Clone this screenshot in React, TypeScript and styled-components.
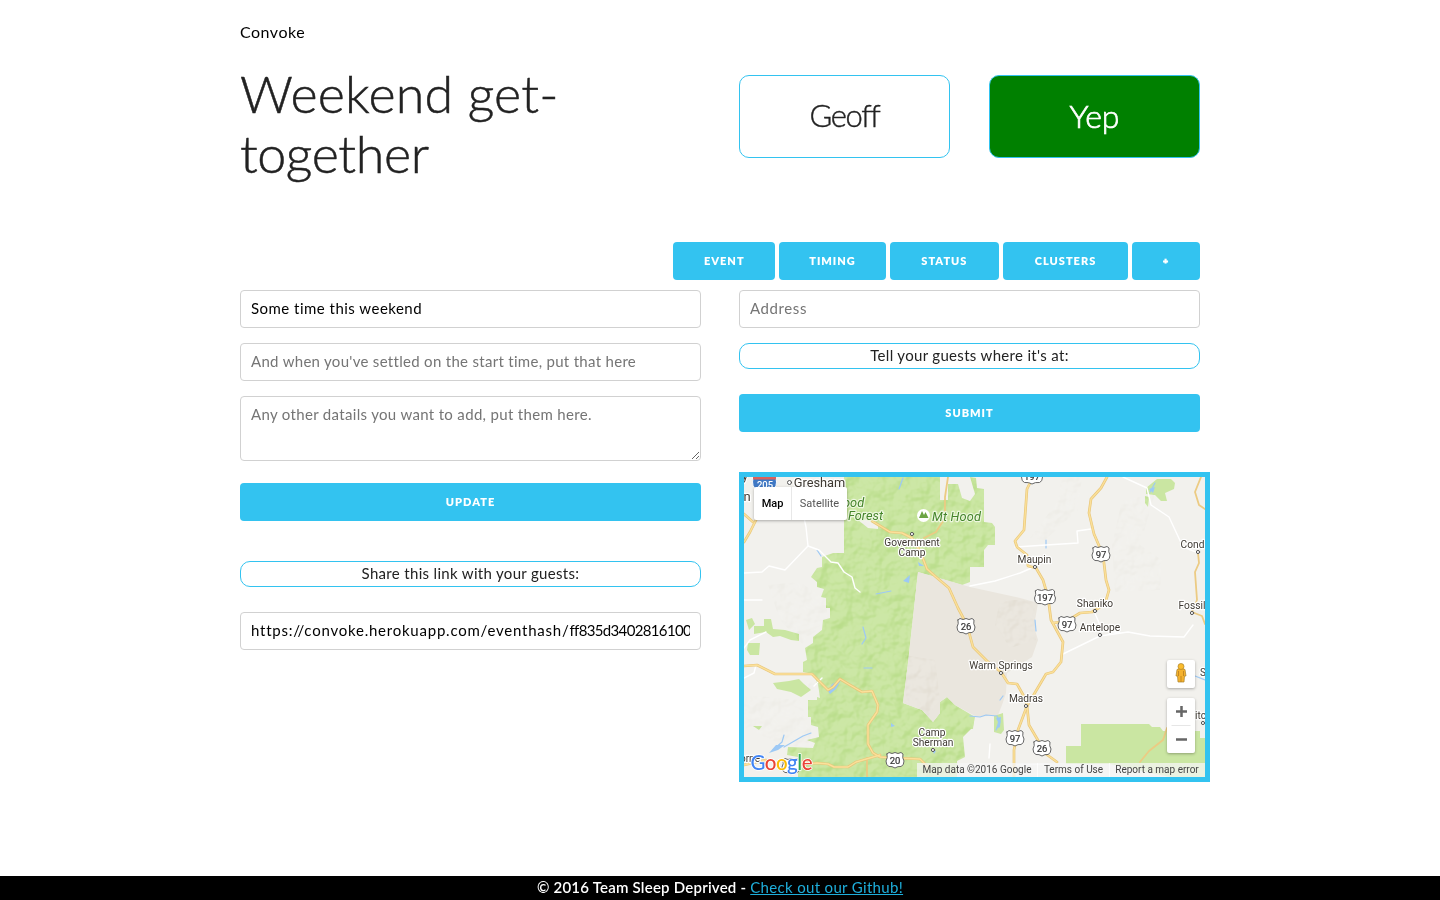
import React from "react";
import styled, { createGlobalStyle } from "styled-components";

const sky = "#33c3f0";

const GlobalStyle = createGlobalStyle`
  *, *::before, *::after { box-sizing: border-box; }
  body { margin: 0; background: #fff; color: #000; font-family: Lato, "Open Sans", sans-serif; font-size: 15px; }
  h1, h2, p { margin: 0; font-weight: inherit; }
`;

const Page = styled.div`
  display: flex;
  flex-direction: column;
  height: 900px;
  overflow: hidden;
`;

const Container = styled.main`
  width: 960px;
  margin: 0 auto;
  flex: 1;
`;

const Brand = styled.div`
  height: 65px;
  padding-top: 20px;
  font-size: 16px;
  line-height: 24px;
  letter-spacing: 0.5px;
`;

const Columns = styled.div`
  display: grid;
  grid-template-columns: 461px 461px;
  column-gap: 38px;
`;

const Hero = styled(Columns)`
  height: 177px;
`;

const Title = styled.h1`
  width: 380px;
  margin-top: -2px;
  font-size: 52px;
  line-height: 60px;
  font-weight: 300;
  letter-spacing: -0.4px;
  color: #222;
  -webkit-text-stroke: 0.5px #222;
`;

const WideLine = styled.span`
  letter-spacing: 0.2px;
`;

const Cards = styled.div`
  display: flex;
  justify-content: space-between;
  padding-top: 10px;
`;

const Card = styled.div<{ $going?: boolean }>`
  display: flex;
  align-items: center;
  justify-content: center;
  width: 211px;
  height: 83px;
  padding-bottom: 3px;
  border: 1px solid ${sky};
  border-radius: 10px;
  font-size: ${(p) => (p.$going ? 32 : 31)}px;
  font-weight: 300;
  letter-spacing: ${(p) => (p.$going ? 0 : -1.4)}px;
  color: ${(p) => (p.$going ? "#fff" : "#222")};
  -webkit-text-stroke: ${(p) => (p.$going ? "0.7px #fff" : "0.4px #222")};
  background: ${(p) => (p.$going ? "#008000" : "#fff")};
`;

const Tabs = styled.nav`
  display: flex;
  justify-content: flex-end;
  gap: 3.75px;
  margin-bottom: 10px;
`;

const Button = styled.button<{ $width?: number }>`
  display: block;
  width: ${(p) => (p.$width ? `${p.$width}px` : "100%")};
  height: 38px;
  padding: 0;
  border: 0;
  border-radius: 4px;
  background: ${sky};
  color: #fff;
  font: 800 11px/38px Lato, sans-serif;
  letter-spacing: 1px;
  text-align: center;
  text-transform: uppercase;
`;

const Plus = styled.span`
  display: block;
  height: 36px;
  font-size: 8px;
  line-height: 36px;
  -webkit-text-stroke: 1px #fff;
`;

const Field = styled.input<{ $track?: number }>`
  display: block;
  width: 100%;
  height: 38px;
  margin: 0 0 15px;
  padding: 5px 10px 7px;
  border: 1px solid #d1d1d1;
  border-radius: 4px;
  background: #fff;
  color: #000;
  font: 400 15px Lato, sans-serif;
  letter-spacing: ${(p) => p.$track ?? 0.3}px;
  outline: none;
  &::placeholder { color: #757575; }
`;

const LinkBox = styled.div`
  height: 38px;
  padding: 0 10px;
  border: 1px solid #d1d1d1;
  border-radius: 4px;
  line-height: 35px;
`;

const LinkText = styled.div`
  overflow: hidden;
  white-space: nowrap;
  letter-spacing: 0.77px;
`;

const Hash = styled.span`
  letter-spacing: -0.65px;
`;

const Details = styled.textarea`
  display: block;
  width: 100%;
  height: 65px;
  margin: 0 0 22px;
  padding: 5px 10px;
  border: 1px solid #d1d1d1;
  border-radius: 4px;
  font: 400 15px/24px Lato, sans-serif;
  letter-spacing: 0.33px;
  outline: none;
  &::placeholder { color: #757575; }
`;

const Hint = styled.p<{ $top?: number }>`
  height: 26px;
  margin: ${(p) => p.$top ?? 0}px 0 25px;
  border: 1px solid ${sky};
  border-radius: 10px;
  color: #222;
  font-size: 15px;
  line-height: 22px;
  letter-spacing: 0.32px;
  text-align: center;
`;

const MapFrame = styled.div`
  position: relative;
  width: 471px;
  height: 310px;
  margin-top: 40px;
  border: 5px solid ${sky};
  background: #f2f1ed;
  font-family: Roboto, sans-serif;
  overflow: hidden;
  > svg { display: block; }
`;

const MapTypes = styled.div`
  position: absolute;
  top: 10px;
  left: 10px;
  display: flex;
  height: 33px;
  border-radius: 2px;
  background: #fff;
  box-shadow: 0 1px 3px rgba(0, 0, 0, 0.3);
  font-size: 11px;
  line-height: 33px;
  text-align: center;
`;

const MapType = styled.span<{ $on?: boolean }>`
  width: ${(p) => (p.$on ? 38 : 55)}px;
  font-weight: ${(p) => (p.$on ? 500 : 400)};
  color: ${(p) => (p.$on ? "#000" : "#565656")};
  border-right: ${(p) => (p.$on ? "1px solid #e8e8e8" : "0")};
`;

const Controls = styled.div`
  position: absolute;
  right: 10px;
  top: 183px;
  display: flex;
  flex-direction: column;
  gap: 10px;
`;

const Control = styled.div<{ $height: number }>`
  width: 28px;
  height: ${(p) => p.$height}px;
  border-radius: 2px;
  background: #fff;
  box-shadow: 0 1px 3px rgba(0, 0, 0, 0.3);
  > svg { display: block; }
`;

const Legal = styled.div`
  position: absolute;
  right: 0;
  bottom: 0;
  display: flex;
  height: 14px;
  padding-right: 1px;
  background: rgba(245, 245, 245, 0.75);
  color: #444;
  font-size: 10px;
  line-height: 14px;
  white-space: nowrap;
`;

const LegalItem = styled.span<{ $width: number }>`
  width: ${(p) => p.$width}px;
  text-align: center;
  & + & { border-left: 1px solid rgba(255, 255, 255, 0.7); }
`;

const Footer = styled.footer`
  height: 24px;
  background: #000;
  color: #fff;
  font-size: 15px;
  font-weight: 600;
  line-height: 22px;
  letter-spacing: 0.22px;
  text-align: center;
  a { color: #1eaedb; font-weight: 400; letter-spacing: 0.33px; }
`;

const forest =
  "M844 477H940V500H948V484H958L962 498L970 501L975 494L970 477L976 478L977 488L984 489V522L992 523L995 527V545H988L984 550V567H970V582L962 585L952 582L918 572L908 663L903 703L922 710L933 722L940 713V702L947 697L955 705L975 717L973 727L963 737L965 757L957 761V777H798V757L787 755L788 747L813 748L815 743L807 740L819 737L818 727L811 725V717H808V700H817V692L807 688V682H817L813 674L803 672V662L807 660L805 648L813 643V637L822 630L823 620L830 618V608H826V598L821 597L824 589L817 587V582L811 577L817 568L822 567V557L833 553V549H826L833 549V553H844Z";

const rockyGround = [
  "M768 585L800 582L826 600L828 618L803 645L780 620Z",
  "M744 695L800 700L811 730L812 748L784 745L744 728Z",
  "M1000 600L1034 600L1036 640L1010 648L995 625Z",
  "M905 655L935 660L940 700L928 716L906 702Z",
  "M1062 477L1082 477L1078 510L1045 540L1030 538L1055 505Z",
  "M1122 500L1155 494L1140 545L1162 560L1160 590L1115 592L1112 545Z",
];

const highways = [
  "M744 666 L757 665 L775 674 L812 674 L828 690 L833 687 L840 679 L850 685 L862 692 L872 691 L878 705 L877 712 L868 725 L868 744 L873 753 L880 757 L896 758 L920 759 L929 768",
  "M880 755 L856 762 L848 767 L834 767 L828 764 L817 763 L798 765 M744 765 L766 760",
  "M872 521 L890 532 L902 533 L912 538 L920 551 L927 569 L936 577 L949 588 L958 608 L967 625 L973 647 L987 661 L1001 672 L1008 683 L1017 684 L1026 700 L1027 706 L1018 730 L1014 750 L1014 777",
  "M1033 477 L1027 489 L1024 530 L1015 541 L1017 547 L1027 555 L1028 566 L1036 568 L1043 580 L1048 597 L1051 620 L1063 642 L1061 662 L1053 672 L1046 674 L1033 696 L1027 706 L1029 725 L1046 754 L1057 762",
  "M1107 477 L1101 488 L1091 499 L1089 513 L1094 534 L1103 555 L1106 580 L1109 590 L1105 604 L1092 612 L1080 613 L1067 621 L1053 623",
  "M744 542 L750 532 L756 520 M744 514 L753 522",
];

const minorHighways = [
  "M1201 477 L1195 492 L1199 505 L1205 509 M1198 553 L1199 563 L1195 572 L1197 600 L1192 612 L1202 616 L1205 624",
  "M1167 728 L1163 740 L1149 751 L1140 762 M948 477 L945 497 L945 518 L936 532 L924 538",
  "M867 758 L867 777 M798 760 L810 762",
];

const localRoads = [
  "M744 573 L762 572 L769 566 L785 570 L808 546 L806 527 L802 508",
  "M808 546 L819 550 L831 562 L838 563 L844 572 L852 577 L855 588 L860 592",
  "M970 586 L995 581 L1020 573 L1034 567 M1015 547 L1046 545 L1078 543 L1077 531 L1091 529",
  "M1123 477 L1147 488 L1151 505 L1169 517 L1183 547 L1196 552",
  "M1063 654 L1100 636 L1128 632 L1150 636 L1184 637 L1193 625",
  "M1094 611 L1102 630 L1120 633 M744 600 L762 600 M744 678 L754 673 L756 665",
  "M990 744 L989 758 M1016 765 L1048 764 M814 686 L822 678 M766 632 L750 640 L744 648",
];

const water = [
  "M744 515 L754 523 M903 478 L899 489 M817 550 L821 556 M876 594 L891 591 M1046 540 L1046 548 M864 668 L872 668",
  "M863 627 L866 638 L862 644 M970 716 L980 717 L986 715 L997 716 L1000 722 L996 730 M1035 620 L1036 631 M1195 676 L1205 680",
  "M773 750 L782 742 L784 735 M784 747 L803 736 L811 733 M1000 700 L1003 696 M1150 492 L1155 483",
];

const places: Array<[string, number, number, number, number]> = [
  ["Government", 912, 546, 912, 534],
  ["Camp", 912, 556, 0, 0],
  ["Maupin", 1034.5, 563, 1035, 567],
  ["Shaniko", 1095, 607, 1095, 611],
  ["Antelope", 1100, 631, 1100, 635],
  ["Warm Springs", 1001, 669, 1001, 673],
  ["Madras", 1026, 702, 1026, 706],
  ["Camp", 932, 736, 0, 0],
  ["Sherman", 933, 746, 933, 750],
  ["Cond", 1192.5, 548, 1198, 552],
  ["Fossil", 1192, 609, 1192, 613],
];

const shields: Array<[string, number, number]> = [
  ["197", 1032, 476],
  ["97", 1101, 554],
  ["197", 1045, 597],
  ["97", 1067, 624],
  ["26", 966, 626],
  ["97", 1015, 738],
  ["26", 1042, 748],
  ["20", 895, 760],
  ["", 791, 766],
];

const Shield = ({ label, x, y }: { label: string; x: number; y: number }) => {
  const w = label.length === 3 ? 10.5 : 9;
  return (
    <g transform={`translate(${x} ${y})`}>
      <path
        d={`M${-w + 1} -6 L${-w + 3} -7.5 Q-3 -5.500 0 -7.5 Q3 -5.500 ${w - 3} -7.5 L${w - 1} -6 Q${w - 2} -2 ${w} 1 Q${w} 5.500 ${w - 3} 6.500 Q3 6 0 8 Q-3 6 ${-w + 3} 6.500 Q${-w} 5.500 ${-w} 1 Q${-w + 2} -2 ${-w + 1} -6Z`}
        fill="#fff"
        stroke="#666"
        strokeWidth="1"
      />
      {label && <text y="4" fontSize="9.500" fill="#333" stroke="#333" strokeWidth=".2" textAnchor="middle">{label}</text>}
    </g>
  );
};

const Terrain = () => (
  <svg width="461" height="300" viewBox="744 477 461 300" fontFamily="Roboto, sans-serif" fill="none" strokeLinejoin="round" strokeLinecap="round">
    <defs>
      <filter id="relief" filterUnits="userSpaceOnUse" x="744" y="477" width="461" height="300" colorInterpolationFilters="sRGB">
        <feTurbulence type="fractalNoise" baseFrequency="0.06" numOctaves="3" seed="4" />
        <feDiffuseLighting surfaceScale="9" diffuseConstant="0.62" lightingColor="#fff">
          <feDistantLight azimuth="235" elevation="55" />
        </feDiffuseLighting>
      </filter>
      <clipPath id="forest"><path d={forest} /></clipPath>
      <clipPath id="rocky">{rockyGround.map((d) => <path key={d} d={d} />)}</clipPath>
    </defs>
    <path fill="#cae6a2" d={forest} />
    <path fill="#f2f1ed" d="M858 520L870 519L878 524V529L868 528Z M803 684L811 678L818 684L820 698L811 695Z" />
    <path fill="#eae6de" d="M918 572L970 587L1020 598L1038 603L1035 620V630L1038 640L1032 657L1007 673L1006 693L1002 705L998 715L977 717L955 705L947 697L940 702V713L933 722L922 710L903 703L908 663Z" />
    <path fill="#cae6a2" d="M754 626H764V619H771L773 629L785 630L799 634V641L791 640L780 636L773 637L766 632L754 634Z M748 643L760 643L759 655L750 655L747 650Z M746 620L752 618L755 624L749 630Z M773 683L789 681L799 679L804 684L811 690L801 697L791 692L777 689Z M753 726L762 726L759 730Z M1081 724L1149 724L1152 727H1160L1163 731H1200V738H1205V777H1170L1110 764H1066V746H1081Z M1146 488L1157 479L1171 479L1175 483L1174 489L1165 493L1167 501L1161 501L1155 495L1146 494Z M1145 496L1149 497L1148 507L1145 503Z M970 716L974 718L973 729H970Z M994 716L1003 713L1004 730L1001 734L994 732Z" />
    <g clipPath="url(#forest)" opacity=".4" style={{ mixBlendMode: "soft-light" }}>
      <rect x="744" y="477" width="461" height="300" filter="url(#relief)" />
    </g>
    <g clipPath="url(#rocky)" opacity=".35" style={{ mixBlendMode: "soft-light" }}>
      <rect x="744" y="477" width="461" height="300" filter="url(#relief)" />
    </g>
    <g stroke="#9dc9f5" strokeWidth="1.2">{water.map((d) => <path key={d} d={d} />)}</g>
    <path fill="#9dc9f5" d="M903 581L910 575L909 583Z M918 562L924 566H919Z M828 691L832 684L841 680L836 689L830 694Z M769 753L776 745L785 745L778 750Z M996 718L1001 717L1000 727L996 729L998 722Z M932 750L936 751L934 754Z M1149 489L1155 487L1153 493Z M891 723L895 726L891 727Z" />
    <g stroke="#fff" strokeWidth="1.4">{localRoads.map((d) => <path key={d} d={d} />)}</g>
    <g stroke="#eccb83" strokeWidth="1.8">{minorHighways.map((d) => <path key={d} d={d} />)}</g>
    <g stroke="#e8c679" strokeWidth="2.7">{highways.map((d) => <path key={d} d={d} />)}</g>
    <g stroke="#fbe09a" strokeWidth="1.4">{highways.map((d) => <path key={d} d={d} />)}</g>
    {shields.map(([label, x, y]) => <Shield key={`${label}-${x}`} label={label} x={x} y={y} />)}
    <g>
      <path fill="#3f78c4" stroke="#fff" d="M753 478H776Q778 487 772 490H757Q751 487 753 478Z" />
      <path fill="#d9625c" d="M753 477H776V479.500H753Z" />
      <text x="765" y="488" fontSize="9.500" fontWeight="500" fill="#fff" textAnchor="middle">205</text>
    </g>
    <g fill="#3f3a33" stroke="#fff" strokeWidth="2.4" paintOrder="stroke" textAnchor="middle">
      {places.map(([name, x, y]) => <text key={`${name}-${x}`} x={x} y={y} fontSize="10.200">{name}</text>)}
      <text x="819.500" y="487" fontSize="12.800">Gresham</text>
      <text x="747" y="500.500" fontSize="13">n</text>
      <text x="745" y="480" fontSize="13">y</text>
      <text x="750" y="762" fontSize="10">orne</text>
      <text x="1203" y="676" fontSize="10">S</text>
      <text x="1200.500" y="719" fontSize="10">itc</text>
    </g>
    <g fill="#fff" stroke="#555" strokeWidth="1">
      {places.filter((p) => p[3] > 0).map(([name, , , x, y]) => <circle key={`${name}-${x}`} cx={x} cy={y} r="1.6" />)}
      <circle cx="789.500" cy="482.500" r="2" />
      <circle cx="1203" cy="723" r="1.600" />
    </g>
    <g fill="#45852b" stroke="#edf7df" strokeWidth="2.4" paintOrder="stroke" fontStyle="italic" fontSize="12.800">
      <text x="843" y="507">ood</text>
      <text x="848" y="520" textLength="35">Forest</text>
      <text x="932" y="521" textLength="49">Mt Hood</text>
    </g>
    <circle cx="923.500" cy="515.500" r="6.500" fill="#fff" />
    <path d="M919 518L922 511L924 515L925.500 512L928.500 518Z" fill="#6ba443" />
    <text x="750.500" y="770" fontFamily="Lato, sans-serif" fontSize="20.500" fontWeight="500" textLength="62" stroke="#fff" strokeWidth="1.500" paintOrder="stroke">
      <tspan fill="#4285f4">G</tspan><tspan fill="#ea4335">o</tspan><tspan fill="#fbbc05">o</tspan><tspan fill="#4285f4">g</tspan><tspan fill="#34a853">l</tspan><tspan fill="#ea4335">e</tspan>
    </text>
  </svg>
);

const tabs: Array<[string, number]> = [["Event", 102], ["Timing", 107], ["Status", 109.25], ["Clusters", 125.5]];

export default function App() {
  return (
    <Page>
      <GlobalStyle />
      <Container>
        <Brand>Convoke</Brand>
        <Hero>
          <Title><WideLine>Weekend get-</WideLine>together</Title>
          <Cards>
            <Card>Geoff</Card>
            <Card $going>Yep</Card>
          </Cards>
        </Hero>
        <Tabs>
          {tabs.map(([label, width]) => <Button key={label} $width={width}>{label}</Button>)}
          <Button $width={68}><Plus>+</Plus></Button>
        </Tabs>
        <Columns>
          <section>
            <Field defaultValue="Some time this weekend" $track={0.48} />
            <Field placeholder="And when you've settled on the start time, put that here" />
            <Details placeholder="Any other datails you want to add, put them here." />
            <Button>Update</Button>
            <Hint $top={40}>Share this link with your guests:</Hint>
            <LinkBox>
              <LinkText>https://convoke.herokuapp.com/eventhash/<Hash>ff835d34028161006</Hash></LinkText>
            </LinkBox>
          </section>
          <section>
            <Field placeholder="Address" $track={0.6} />
            <Hint>Tell your guests where it's at:</Hint>
            <Button>Submit</Button>
            <MapFrame>
              <Terrain />
              <MapTypes>
                <MapType $on>Map</MapType>
                <MapType>Satellite</MapType>
              </MapTypes>
              <Controls>
                <Control $height={28}>
                  <svg width="28" height="28" viewBox="0 0 28 28">
                    <path d="M10 9.500Q14 7 18 9.500L19 16H17.500L17 22H11L10.500 16H9Z" fill="#f5b22d" stroke="#a9832d" strokeWidth=".7" />
                    <circle cx="14" cy="6.500" r="3" fill="#fbbc2c" stroke="#a9832d" strokeWidth=".7" />
                    <path d="M14 16V22M11.500 11V16M16.500 11V16" stroke="#b87d20" strokeWidth=".8" />
                  </svg>
                </Control>
                <Control $height={55}>
                  <svg width="28" height="55" viewBox="0 0 28 55">
                    <path d="M9 13.500H20M14.500 8V19M9 41.500H20" stroke="#666" strokeWidth="2.500" />
                    <path d="M4.500 27.500H23.500" stroke="#e6e6e6" />
                  </svg>
                </Control>
              </Controls>
              <Legal>
                <LegalItem $width={120}>Map data ©2016 Google</LegalItem>
                <LegalItem $width={72}>Terms of Use</LegalItem>
                <LegalItem $width={95}>Report a map error</LegalItem>
              </Legal>
            </MapFrame>
          </section>
        </Columns>
      </Container>
      <Footer>© 2016 Team Sleep Deprived - <a href="#github">Check out our Github!</a></Footer>
    </Page>
  );
}
